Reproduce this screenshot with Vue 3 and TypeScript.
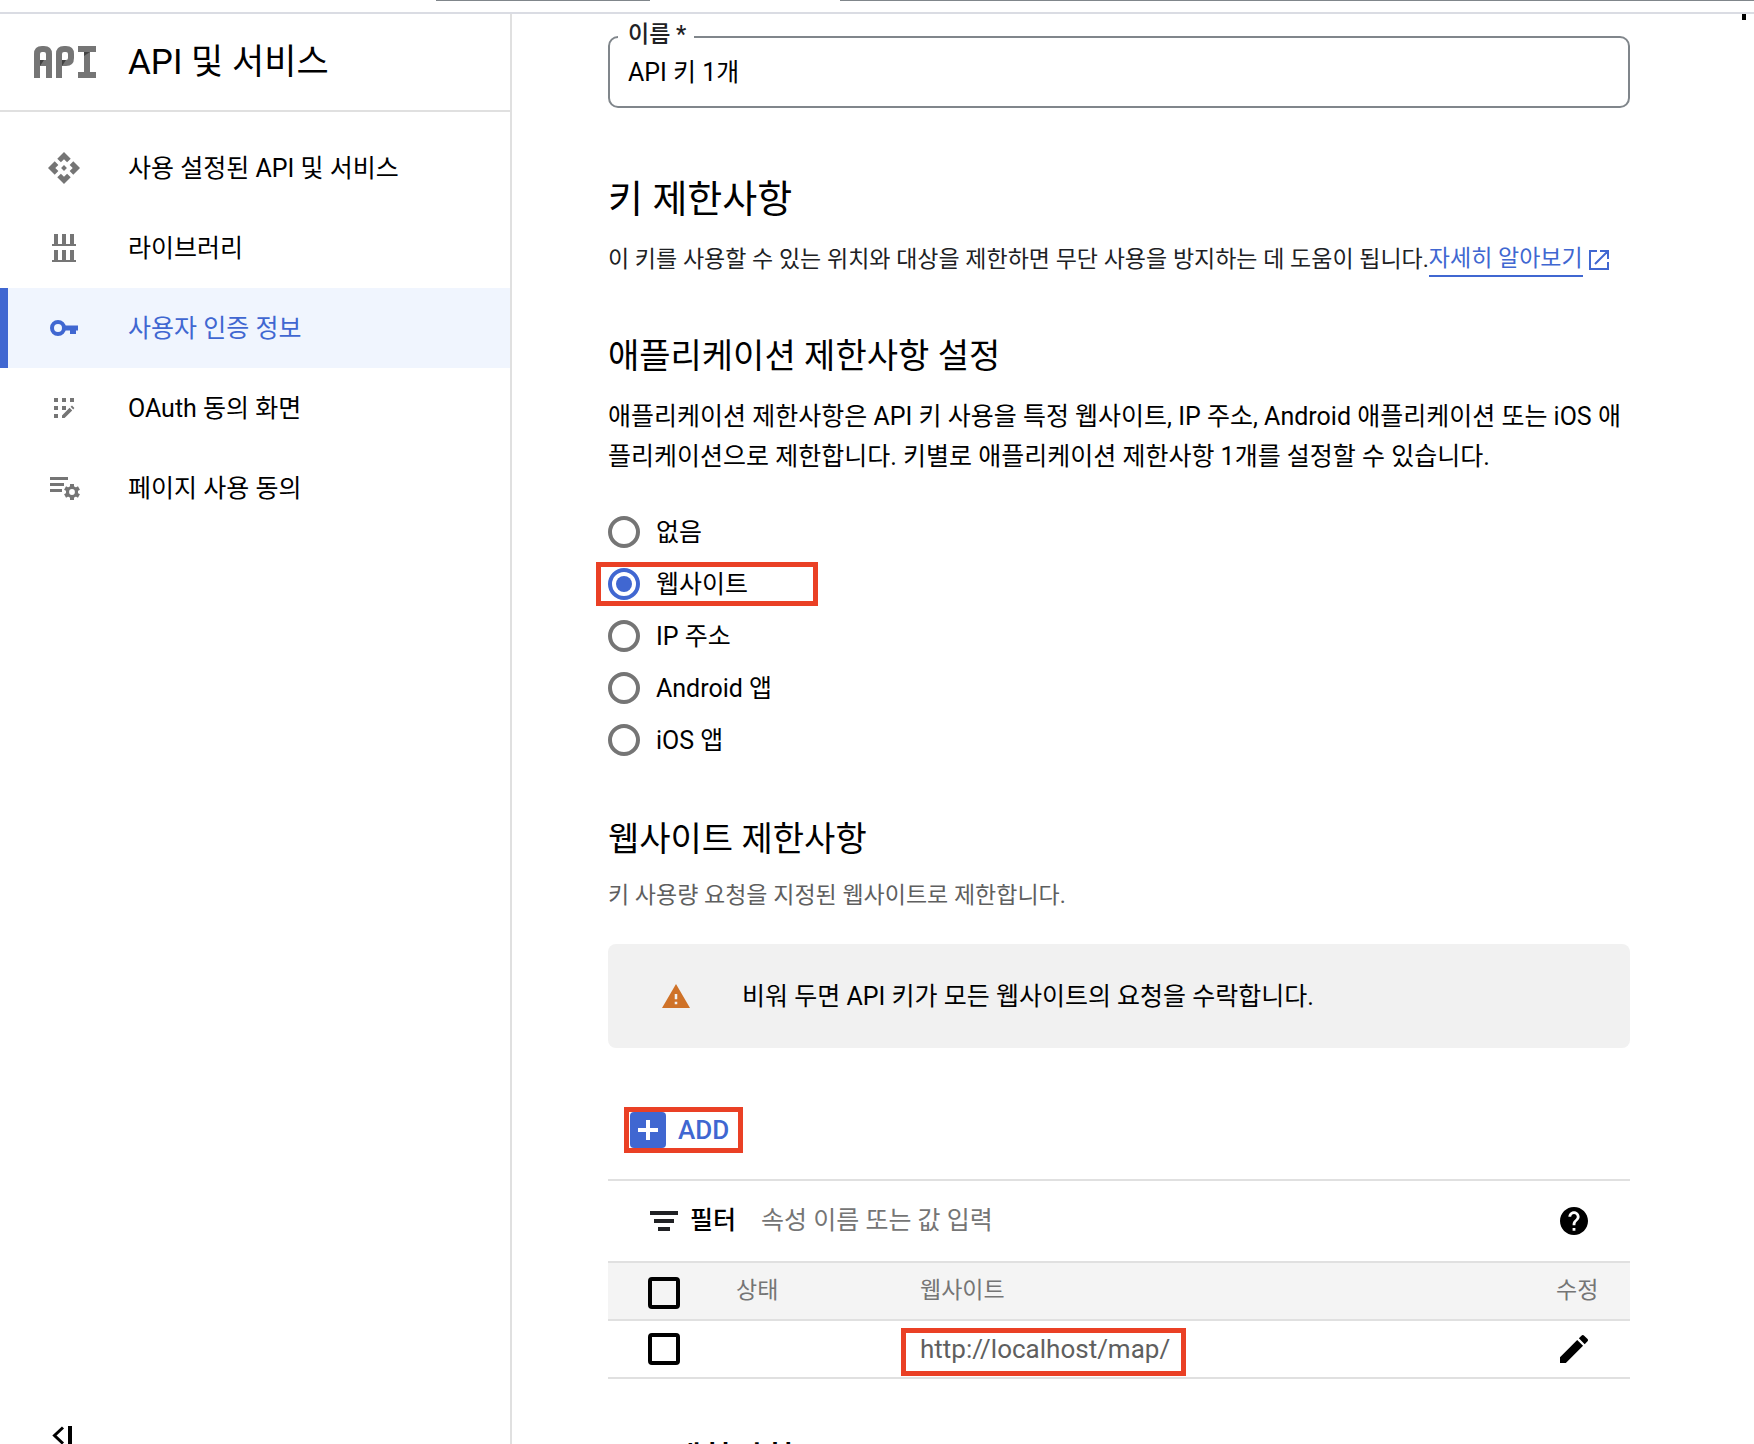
<script setup lang="ts">
import { ref } from 'vue'

interface NavItem {
  id: string
  label: string
  active?: boolean
}

const navItems: NavItem[] = [
  { id: 'api', label: '사용 설정된 API 및 서비스' },
  { id: 'library', label: '라이브러리' },
  { id: 'key', label: '사용자 인증 정보', active: true },
  { id: 'consent', label: 'OAuth 동의 화면' },
  { id: 'agreement', label: '페이지 사용 동의' },
]

const restrictions = [
  { id: 'none', label: '없음' },
  { id: 'website', label: '웹사이트' },
  { id: 'ip', label: 'IP 주소' },
  { id: 'android', label: 'Android 앱' },
  { id: 'ios', label: 'iOS 앱' },
]

const keyName = ref('API 키 1개')
const restriction = ref('website')
const filterText = ref('')
const sites = ['http://localhost/map/']
const gearTeeth = [0, 60, 120, 180, 240, 300]
</script>

<template>
  <div class="app" lang="ko">
    <div class="topbar">
      <span class="edge edge-short"></span>
      <span class="edge edge-long"></span>
    </div>

    <div class="body">
      <aside class="sidebar">
        <header class="product">
          <svg class="product-logo" viewBox="0 0 64 32" aria-hidden="true">
            <g fill="none" stroke="#757575" stroke-width="6">
              <path d="M5 32V8q0-5 5-5h2q5 0 5 5v24M5 17h12" />
              <path d="M27 32V8q0-5 5-5h2q5 0 5 5v4q0 5-5 5h-7" />
              <path d="M46 3h18M46 29h18M55 3v26" />
            </g>
            <path d="M8 14h4l-4 6zM30 14h4l-4 6zM52 6h6l-6 4z" fill="#424242" />
          </svg>
          <h1>API 및 서비스</h1>
        </header>

        <nav>
          <a
            v-for="item in navItems"
            :key="item.id"
            href="#"
            class="nav-item"
            :class="{ active: item.active }"
          >
            <svg v-if="item.id === 'api'" viewBox="1 1 22 22" aria-hidden="true">
              <path d="M14 12l-2 2-2-2 2-2 2 2zm-2-6l2.12 2.12 2.5-2.5L12 1 7.38 5.62l2.5 2.5L12 6zm-6 6l2.12-2.12-2.5-2.5L1 12l4.62 4.62 2.5-2.5L6 12zm12 0l-2.12 2.12 2.5 2.5L23 12l-4.62-4.62-2.5 2.5L18 12zm-6 6l-2.12-2.12-2.5 2.5L12 23l4.62-4.62-2.5-2.5L12 18z" />
            </svg>
            <svg v-else-if="item.id === 'library'" viewBox="0 0 32 32" aria-hidden="true">
              <path d="M6 2h4v10h4V2h4v10h4V2h4v10h2v2H4v-2h2zM6 18h4v10h4V18h4v10h4V18h4v10h2v2H4v-2h2z" />
            </svg>
            <svg v-else-if="item.id === 'key'" viewBox="0 0 32 32" aria-hidden="true">
              <circle cx="10" cy="16" r="6" fill="none" stroke="currentColor" stroke-width="4" />
              <path d="M16.500 13.500H30v5h-2V22h-6v-3.500h-5.500z" />
            </svg>
            <svg v-else-if="item.id === 'consent'" viewBox="0 0 32 32" aria-hidden="true">
              <path d="M6 6h4v4H6zM14 6h4v4h-4zM22 6h4v4h-4zM6 14h4v4H6zM14 14h4v4h-4zM6 22h4v4H6z" />
              <path d="M14 23.400l7.600-7.600 2.600 2.600-7.600 7.600H14zM22.600 14.800l1.400-1.200 2.400 2.400-1.200 1.400z" />
            </svg>
            <svg v-else viewBox="0 0 32 32" aria-hidden="true">
              <path d="M2 5h18v3H2zM2 11h14v3H2zM2 17h12v3H2z" />
              <circle cx="24" cy="20" r="4.500" fill="none" stroke="currentColor" stroke-width="3.200" />
              <rect
                v-for="angle in gearTeeth"
                :key="angle"
                x="22"
                y="12"
                width="4"
                height="4"
                :transform="`rotate(${angle} 24 20)`"
              />
            </svg>
            <span>{{ item.label }}</span>
          </a>
        </nav>

        <button class="collapse" type="button" aria-label="메뉴 접기">
          <svg viewBox="0 0 32 32" aria-hidden="true">
            <path d="M15 7.500L6.500 15.500l8.500 8" fill="none" stroke="#000" stroke-width="3" />
            <path d="M20 6h4v20h-4z" />
          </svg>
        </button>
      </aside>

      <main class="content">
        <div class="field">
          <label for="key-name">이름 *</label>
          <input id="key-name" v-model="keyName" type="text" />
        </div>

        <h2>키 제한사항</h2>
        <p class="intro">
          이 키를 사용할 수 있는 위치와 대상을 제한하면 무단 사용을 방지하는 데 도움이 됩니다.<a href="#" class="more">자세히 알아보기</a>
          <svg class="external" viewBox="0 0 20 20" aria-hidden="true">
            <path d="M8 1H1v18h18v-7M11 1h8v8M19 1L6 14" fill="none" stroke="currentColor" stroke-width="2" />
          </svg>
        </p>

        <h3 class="application-heading">애플리케이션 제한사항 설정</h3>
        <p class="description">
          애플리케이션 제한사항은 API 키 사용을 특정 웹사이트, IP 주소, Android 애플리케이션 또는 iOS 애플리케이션으로 제한합니다. 키별로 애플리케이션 제한사항 1개를 설정할 수 있습니다.
        </p>

        <div class="radios" role="radiogroup" aria-label="애플리케이션 제한사항 설정">
          <label v-for="option in restrictions" :key="option.id" class="radio">
            <input v-model="restriction" type="radio" name="restriction" :value="option.id" />
            <span>{{ option.label }}</span>
            <i v-if="option.id === 'website'" class="highlight highlight-radio"></i>
          </label>
        </div>

        <h3>웹사이트 제한사항</h3>
        <p class="hint">키 사용량 요청을 지정된 웹사이트로 제한합니다.</p>

        <div class="alert">
          <svg viewBox="1 2 22 19" aria-hidden="true">
            <path d="M1 21h22L12 2 1 21zm12-3h-2v-2h2v2zm0-4h-2v-4h2v4z" />
          </svg>
          <span>비워 두면 API 키가 모든 웹사이트의 요청을 수락합니다.</span>
        </div>

        <button class="add" type="button">
          <svg viewBox="0 0 36 36" aria-hidden="true">
            <rect width="36" height="36" rx="4" fill="#4067d1" />
            <path d="M18 8v20M8 18h20" stroke="#fff" stroke-width="4" />
          </svg>
          ADD
        </button>

        <section class="sites">
          <div class="filter">
            <svg class="filter-icon" viewBox="0 0 28 20" aria-hidden="true">
              <path d="M0 0h28v4H0zM4 8h20v4H4zM8 16h12v4H8z" />
            </svg>
            <label for="site-filter">필터</label>
            <input id="site-filter" v-model="filterText" type="text" placeholder="속성 이름 또는 값 입력" />
            <button type="button" class="icon-button" aria-label="도움말">
              <svg viewBox="2 2 20 20" aria-hidden="true">
                <path d="M12 2C6.480 2 2 6.480 2 12s4.480 10 10 10 10-4.480 10-10S17.520 2 12 2zm1 17h-2v-2h2v2zm2.070-7.750l-.9.920C13.450 12.900 13 13.500 13 15h-2v-.5c0-1.100.45-2.100 1.170-2.830l1.240-1.260c.37-.36.59-.86.59-1.410 0-1.100-.9-2-2-2s-2 .9-2 2H8c0-2.210 1.790-4 4-4s4 1.790 4 4c0 .88-.36 1.680-.93 2.250z" />
              </svg>
            </button>
          </div>

          <table>
            <colgroup>
              <col class="col-check" />
              <col class="col-state" />
              <col />
              <col class="col-edit" />
            </colgroup>
            <thead>
              <tr>
                <th><input type="checkbox" aria-label="모두 선택" /></th>
                <th>상태</th>
                <th>웹사이트</th>
                <th>수정</th>
              </tr>
            </thead>
            <tbody>
              <tr v-for="site in sites" :key="site">
                <td><input type="checkbox" :aria-label="site" /></td>
                <td></td>
                <td class="url">{{ site }}<i class="highlight highlight-url"></i></td>
                <td>
                  <button type="button" class="icon-button edit" aria-label="수정">
                    <svg viewBox="3 3 18 18" aria-hidden="true">
                      <path d="M3 17.250V21h3.750L17.810 9.940l-3.750-3.750L3 17.250zM20.710 7.040c.39-.39.39-1.020 0-1.410l-2.340-2.340c-.39-.39-1.020-.39-1.410 0l-1.830 1.830 3.750 3.750 1.830-1.830z" />
                    </svg>
                  </button>
                </td>
              </tr>
            </tbody>
          </table>
        </section>

        <h3 class="api-heading">API 제한사항</h3>
      </main>

      <span class="scroll-mark"></span>
    </div>
  </div>
</template>

<style>
body {
  margin: 0;
  background: #fff;
}
</style>

<style scoped>
* {
  box-sizing: border-box;
}

.app {
  display: flex;
  flex-direction: column;
  height: 100vh;
  overflow: hidden;
  color: #000;
  font-family: Roboto, "Noto Sans CJK KR", sans-serif;
  font-size: 25px;
  line-height: 40px;
}

h1,
h2,
h3,
p {
  margin: 0;
  font-weight: 400;
}

a {
  color: inherit;
  text-decoration: none;
}

button,
input {
  margin: 0;
  padding: 0;
  border: 0;
  background: none;
  color: inherit;
  font: inherit;
  outline: none;
}

svg {
  display: block;
  flex: none;
  fill: currentColor;
}

.topbar {
  display: flex;
  flex: none;
  height: 14px;
  padding-left: 436px;
  gap: 190px;
  border-bottom: 2px solid #dadce3;
}

.edge {
  height: 1px;
  background: #80868b;
}

.edge-short {
  width: 214px;
}

.edge-long {
  flex: 1;
}

.body {
  position: relative;
  display: flex;
  flex: 1;
  min-height: 0;
}

.scroll-mark {
  position: absolute;
  top: 0;
  right: 8px;
  width: 4px;
  height: 6px;
  background: #000;
}

.sidebar {
  display: flex;
  flex: none;
  flex-direction: column;
  width: 512px;
  border-right: 2px solid #e0e0e0;
}

.product {
  display: flex;
  align-items: center;
  gap: 32px;
  height: 98px;
  padding-left: 32px;
  border-bottom: 2px solid #e0e0e0;
}

.product-logo {
  width: 64px;
  height: 32px;
}

h1 {
  padding-top: 2px;
  font-size: 35px;
}

nav {
  padding-top: 16px;
}

.nav-item {
  display: flex;
  align-items: center;
  gap: 48px;
  height: 80px;
  padding-left: 40px;
  border-left: 8px solid transparent;
}

.nav-item span,
.radio span,
.alert span {
  padding-top: 2px;
}

.nav-item svg {
  width: 32px;
  height: 32px;
  color: #757575;
}

.nav-item.active,
.nav-item.active svg {
  color: #4067d1;
}

.nav-item.active {
  border-left-color: #4067d1;
  background: #f0f5fe;
}

.collapse {
  width: 80px;
  height: 24px;
  margin-top: auto;
  padding-left: 48px;
  overflow: hidden;
}

.collapse svg {
  width: 32px;
  height: 32px;
}

.content {
  flex: 1;
  min-width: 0;
  padding: 22px 124px 0 96px;
}

.field {
  position: relative;
}

.field label {
  position: absolute;
  top: -15px;
  left: 10px;
  padding: 0 8px 0 10px;
  background: #fff;
  color: #202124;
  font-size: 23px;
  font-weight: 500;
  line-height: 28px;
}

.field input {
  display: block;
  width: 100%;
  height: 72px;
  padding: 0 18px 4px;
  border: 2px solid #80868b;
  border-radius: 10px;
}

h2 {
  margin-top: 67px;
  font-size: 38px;
  line-height: 48px;
}

h3 {
  margin-top: 53px;
  font-size: 34px;
}

.intro {
  display: flex;
  align-items: center;
  margin-top: 17px;
  color: #202124;
  font-size: 23px;
  white-space: nowrap;
}

.more {
  border-bottom: 2px solid #4067d1;
  color: #4067d1;
  line-height: 32px;
}

.external {
  width: 20px;
  height: 20px;
  margin-left: 6px;
  color: #4067d1;
}

.application-heading {
  margin-top: 56px;
}

.description {
  margin-top: 21px;
}

.radios {
  display: flex;
  flex-direction: column;
  align-items: flex-start;
  margin-top: 29px;
}

.radio {
  position: relative;
  display: flex;
  align-items: center;
  gap: 16px;
  height: 52px;
}

.radio input {
  width: 32px;
  height: 32px;
  border: 4px solid #757575;
  border-radius: 50%;
  appearance: none;
}

.radio input:checked {
  border-color: #4067d1;
  background: #4067d1;
  background-clip: content-box;
  padding: 4px;
}

.highlight {
  position: absolute;
  border: 5px solid #ea4025;
  pointer-events: none;
}

.highlight-radio {
  top: 4px;
  left: -12px;
  width: 222px;
  height: 44px;
}

.highlight-url {
  top: 7px;
  left: -19px;
  width: 285px;
  height: 48px;
}

.hint {
  margin-top: 17px;
  color: #5f5f5f;
  font-size: 23px;
}

.alert {
  display: flex;
  align-items: center;
  gap: 52px;
  height: 104px;
  margin-top: 28px;
  padding-left: 54px;
  border-radius: 8px;
  background: #f1f1f1;
}

.alert svg {
  width: 28px;
  height: 26px;
  color: #cf7228;
}

.add {
  display: flex;
  align-items: center;
  gap: 12px;
  height: 46px;
  margin: 59px 0 26px 16px;
  padding: 0 9px 0 1px;
  border: 5px solid #ea4025;
  color: #4067d1;
  font-size: 26px;
  font-weight: 500;
}

.add svg {
  width: 36px;
  height: 36px;
}

.sites {
  border-top: 2px solid #e0e0e0;
}

.filter {
  display: flex;
  align-items: center;
  height: 80px;
  padding: 0 42px;
}

.filter-icon {
  width: 28px;
  height: 20px;
  color: #202124;
}

.filter label {
  margin: 0 25px 0 12px;
  font-weight: 500;
}

.filter input {
  flex: 1;
  min-width: 0;
}

.filter input::placeholder {
  color: #757575;
  opacity: 1;
}

.icon-button svg {
  width: 28px;
  height: 28px;
}

table {
  width: 100%;
  border-collapse: separate;
  border-spacing: 0;
  border-top: 2px solid #e0e0e0;
  table-layout: fixed;
}

.col-check {
  width: 128px;
}

.col-state {
  width: 184px;
}

.col-edit {
  width: 74px;
}

th,
td {
  position: relative;
  height: 58px;
  padding: 0;
  border-bottom: 2px solid #e0e0e0;
  text-align: left;
  vertical-align: middle;
}

th {
  background: #f4f4f4;
  color: #757575;
  font-size: 23px;
  font-weight: 400;
}

.url {
  color: #5f5f5f;
  font-size: 26px;
}

table input {
  display: block;
  width: 32px;
  height: 32px;
  margin-left: 40px;
  border: 4px solid #000;
  border-radius: 4px;
  appearance: none;
}

th input {
  margin-top: 4px;
}

.edit {
  display: block;
  margin-left: 4px;
}

.api-heading {
  margin-top: 60px;
  font-weight: 500;
}
</style>
